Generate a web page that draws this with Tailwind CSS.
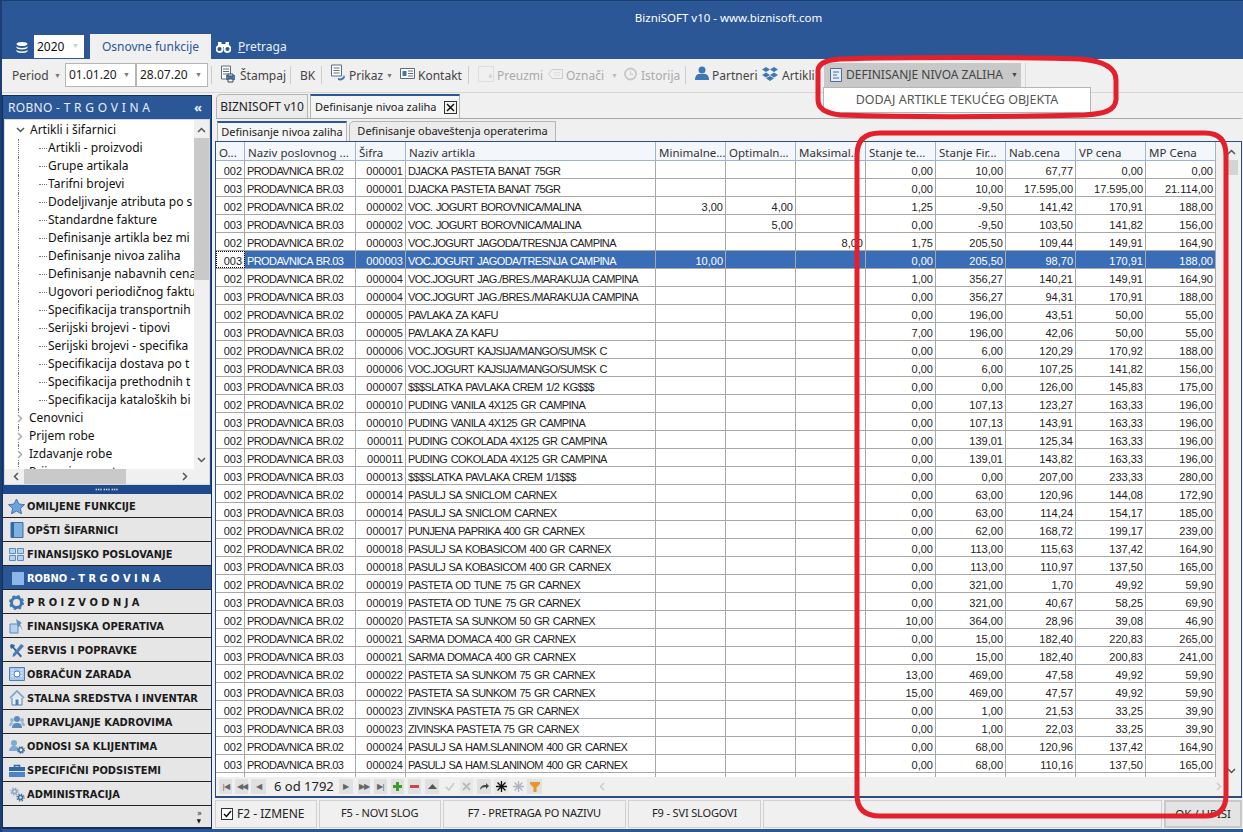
<!DOCTYPE html>
<html lang="en">
<head>
  <meta charset="UTF-8">
  <title>BizniSOFT v10</title>
  <script src="https://cdn.jsdelivr.net/npm/@tailwindcss/browser@4"></script>
</head>
<body class="bg-[#f0f0f0] text-[#222] font-['Noto_Sans','Liberation_Sans',sans-serif] text-[12px] overflow-hidden">
<div class="relative w-[1243px] h-[832px] overflow-hidden flex flex-col border-l-2 border-[#1c3f73]">

  <!-- title bar + ribbon tabs -->
  <div class="h-[59px] shrink-0 bg-[#2b5797] flex flex-col -ml-[2px]">
    <div class="h-[34px] flex items-center justify-center pl-[214px] text-white text-[11.5px] border-t border-[#1c3f73]">BizniSOFT v10 - www.biznisoft.com</div>
    <div class="h-[25px] flex items-end">
      <svg class="ml-[16px] mb-[6px]" width="12" height="11" viewBox="0 0 12 11"><ellipse cx="6" cy="2" rx="5.5" ry="2" fill="#fff"/><path d="M.5 4c0 1 2.5 2 5.500 2s5.500-1 5.500-2v1.500c0 1-2.500 2-5.500 2s-5.500-1-5.500-2zM.5 7.500c0 1 2.500 2 5.500 2s5.500-1 5.500-2v1.500c0 1-2.500 2-5.500 2s-5.500-1-5.500-2z" fill="#fff"/></svg>
      <div class="ml-[6px] mb-[1px] w-[50px] h-[23px] bg-white text-[#111] text-[12px] flex items-center justify-between pl-[3px] pr-[5px]"><span>2020</span><span class="text-[#ccc] text-[7px]">▼</span></div>
      <div class="ml-[6px] w-[121px] h-[25px] bg-[#f0f0f0] text-[#2b5797] flex items-center justify-center text-[12px]">Osnovne funkcije</div>
      <svg class="ml-[5px] mb-[6px]" width="15" height="12" viewBox="0 0 15 12"><circle cx="3.500" cy="8" r="3" fill="none" stroke="#fff" stroke-width="1.800"/><circle cx="11.500" cy="8" r="3" fill="none" stroke="#fff" stroke-width="1.800"/><path d="M2 1h3.500v5H2zM9.500 1H13v5H9.500zM5.500 3h4v3h-4z" fill="#fff"/></svg>
      <div class="ml-[7px] mb-[3px] text-[#e8eef7] text-[12px]"><span class="underline">P</span>retraga</div>
    </div>
  </div>

  <!-- toolbar -->
  <div class="h-[34px] shrink-0 flex items-start pt-[4px] text-[12px] text-[#444] border-b border-[#d6d6d6]">
    <span class="ml-[10px] w-[33px] mt-[4px]">Period</span>
    <span class="ml-[9px] w-[11px] mt-[8px] text-[7px] text-[#777]">▼</span>
    <div class="w-[71px] h-[24px] bg-white border border-[#b5b5b5] flex items-center justify-between pl-[3px] pr-[5px] text-[#222]"><span>01.01.20</span><span class="text-[7px] text-[#777]">▼</span></div>
    <div class="w-[72px] h-[24px] bg-white border border-[#b5b5b5] flex items-center justify-between pl-[3px] pr-[5px] text-[#222]"><span>28.07.20</span><span class="text-[7px] text-[#777]">▼</span></div>
    <i class="ml-[3px] mt-[3px] w-px h-[18px] bg-[#ccc]"></i>
    <svg class="ml-[8px] mt-[2px]" width="16" height="18" viewBox="0 0 16 18"><path d="M1.500 1h9v13h-9z" fill="#fff" stroke="#5b6b80"/><path d="M3 4h6M3 6.500h6M3 9h6" stroke="#5b6b80"/><path d="M6 10h9v5H6z" fill="#4a78b0"/><path d="M8 9h5v2H8zM8 14h5v3H8z" fill="#fff" stroke="#345"/></svg>
    <span class="ml-[4px] w-[44px] mt-[4px]">Štampaj</span>
    <i class="ml-[6px] mt-[3px] w-px h-[18px] bg-[#ccc]"></i>
    <span class="ml-[9px] w-[15px] mt-[4px]">BK</span>
    <i class="ml-[6px] mt-[3px] w-px h-[18px] bg-[#ccc]"></i>
    <svg class="ml-[8px] mt-[1px]" width="16" height="18" viewBox="0 0 16 18"><path d="M1.500 1h10v11h-10z" fill="#fff" stroke="#5b6b80"/><path d="M3.500 4h6M3.500 6.500h6M3.500 9h6" stroke="#5b6b80"/><path d="M8 14c3 1 5 0 6-3l1 2c-1 3-4 4-7 3z" fill="#3f77b5"/></svg>
    <span class="ml-[3px] w-[31px] mt-[4px]">Prikaz</span>
    <span class="ml-[6px] w-[13px] mt-[8px] text-[7px] text-[#777]">▼</span>
    <svg class="ml-[1px] mt-[5px]" width="15" height="11" viewBox="0 0 15 11"><path d="M.5.500h14v10H.5z" fill="#fff" stroke="#5b6b80"/><path d="M2.500 3h4v5h-4z" fill="#3f77b5"/><path d="M8 3h5M8 5.500h5M8 8h5" stroke="#5b6b80"/></svg>
    <span class="ml-[3px] w-[44px] mt-[4px]">Kontakt</span>
    <i class="ml-[6px] mt-[3px] w-px h-[18px] bg-[#ccc]"></i>
    <svg class="ml-[9px] mt-[3px]" width="16" height="16" viewBox="0 0 16 16"><path d="M.5.500h15v15H.5z" fill="none" stroke="#ddd"/><path d="M4 4l4 1 4 5-2 1 4 1-1-4-2 1-3-4z" fill="#ccc"/></svg>
    <span class="ml-[3px] w-[43px] mt-[4px] text-[#aaa]">Preuzmi</span>
    <svg class="ml-[8px] mt-[6px]" width="15" height="10" viewBox="0 0 15 10"><path d="M4 .500h10.500v9H4L.5 5z" fill="none" stroke="#ccc"/><path d="M6 3.500h6M6 6h6" stroke="#ddd"/></svg>
    <span class="ml-[3px] w-[36px] mt-[4px] text-[#aaa]">Označi</span>
    <span class="ml-[9px] w-[12px] mt-[8px] text-[7px] text-[#bbb]">▼</span>
    <svg class="mt-[4px]" width="14" height="14" viewBox="0 0 14 14"><circle cx="7.500" cy="7" r="5.500" fill="none" stroke="#c8c8c8" stroke-width="1.800"/><path d="M7.500 4v3.500H10" fill="none" stroke="#c8c8c8"/></svg>
    <span class="ml-[4px] w-[37px] mt-[4px] text-[#aaa]">Istorija</span>
    <i class="ml-[7px] mt-[3px] w-px h-[18px] bg-[#ccc]"></i>
    <svg class="ml-[9px] mt-[3px]" width="14" height="15" viewBox="0 0 14 15"><circle cx="7" cy="4" r="3.500" fill="#3f77b5"/><path d="M0 14c0-4 2-6 4-6h6c2 0 4 2 4 6z" fill="#3f77b5"/></svg>
    <span class="ml-[3px] w-[44px] mt-[4px]">Partneri</span>
    <svg class="ml-[6px] mt-[3px]" width="16" height="15" viewBox="0 0 16 15"><path d="M4 1l4 2.500L4 6 0 3.500zM12 1l4 2.500L12 6 8 3.500zM4 6.500L8 9l-4 2.500L0 9zM12 6.500L16 9l-4 2.500L8 9zM4 12.200l4-2.200 4 2.200L8 15z" fill="#3f77b5"/></svg>
    <span class="ml-[4px] w-[30px] mt-[4px]">Artikli</span>
    <div class="ml-[12px] w-[197px] h-[24px] bg-[#c8c8c8] flex items-center text-[#444]">
      <svg class="ml-[6px]" width="12" height="14" viewBox="0 0 12 14"><path d="M.5.500h11v13H.5z" fill="#e6eef7" stroke="#4a6d96"/><path d="M3 4h6M3 7h4M3 10h6" stroke="#4a6d96"/></svg>
      <span class="ml-[4px] text-[12px] whitespace-nowrap">DEFINISANJE NIVOA ZALIHA</span>
      <span class="ml-[8px] text-[7px] text-[#444]">▼</span>
    </div>
    <i class="ml-[4px] w-px h-[26px] bg-[#d6d6d6]"></i>
  </div>

  <!-- main -->
  <div class="flex-1 min-h-0 flex pt-[2px]">
    <!-- left side -->
    <div class="w-[210px] shrink-0 flex flex-col bg-[#1c4a8c] border border-[#12305c] border-b-2">
      <div class="h-[23px] shrink-0 bg-[#2b5797] text-[#e8eef7] flex items-center justify-between pl-[5px] pr-[9px] text-[12px]"><span class="tracking-[0.3px]">ROBNO - T R G O V I N A</span><span class="font-bold text-[13px] leading-none">«</span></div>
      <div class="h-[366px] shrink-0 bg-[#f0f0f0] mx-[1px] flex flex-col border border-[#d8d8d8]">
        <div class="flex-1 min-h-0 flex">
          <div id="tree" class="w-[189px] bg-white overflow-hidden pt-[1px] text-[12px] text-[#111]"></div>
          <div class="flex-1 flex flex-col items-center text-[#555]">
            <svg class="mt-[7px]" width="9" height="6" viewBox="0 0 9 6"><path d="M1 5l3.500-3.500L8 5" fill="none" stroke="#555" stroke-width="1.500"/></svg>
            <div class="w-full h-[142px] mt-[5px] bg-[#c9c9c9]"></div>
            <svg class="mt-auto mb-[6px]" width="9" height="6" viewBox="0 0 9 6"><path d="M1 1l3.500 3.500L8 1" fill="none" stroke="#555" stroke-width="1.500"/></svg>
          </div>
        </div>
        <div class="h-[15px] shrink-0 flex items-center">
          <svg class="ml-[8px]" width="6" height="9" viewBox="0 0 6 9"><path d="M5 1L1.500 4.500 5 8" fill="none" stroke="#555" stroke-width="1.500"/></svg>
          <div class="ml-[5px] w-[102px] h-full bg-[#c9c9c9]"></div>
          <svg class="ml-[56px]" width="6" height="9" viewBox="0 0 6 9"><path d="M1 1l3.500 3.500L1 8" fill="none" stroke="#555" stroke-width="1.500"/></svg>
        </div>
      </div>
      <div class="h-[9px] shrink-0 flex items-center justify-center text-white text-[7px] leading-none tracking-[1px] font-bold">⋯⋯⋯</div>
      <div id="nav" class="flex-1 min-h-0 flex flex-col text-[11px] font-bold text-[#1a1a1a] font-['DejaVu_Sans_Condensed','DejaVu_Sans',sans-serif]">
        <div class="h-[24px] pt-[3px] bg-[#e6e6e6] border-b border-[#222] flex items-center pl-[5px] gap-[2px]">
          <svg class="-mt-[2px]" width="17" height="16" viewBox="0 0 17 16"><path d="M8.500 1l2.400 5 5.600.7-4.100 3.700 1.100 5.400-5-2.700-5 2.700 1.100-5.400L.5 6.700l5.600-.7z" fill="#6fa3dc" stroke="#3f77b5"/></svg><span>OMILJENE FUNKCIJE</span>
        </div>
        <div class="h-[24px] pt-[3px] bg-[#e6e6e6] border-b border-[#222] flex items-center pl-[7px] gap-[3px]">
          <svg class="-mt-[2px]" width="14" height="16" viewBox="0 0 14 16"><path d="M1 .500h12v15H1z" fill="#7fb0e2" stroke="#3f6f9f"/><path d="M1 .500h3v15H1z" fill="#2f6aa8"/></svg><span>OPŠTI ŠIFARNICI</span>
        </div>
        <div class="h-[24px] pt-[3px] bg-[#e6e6e6] border-b border-[#222] flex items-center pl-[6px] gap-[3px]">
          <svg class="-mt-[2px]" width="15" height="13" viewBox="0 0 15 13"><path d="M.5.500h6v5h-6zM8.500.500h6v5h-6zM.5 7.500h6v5h-6zM8.500 7.500h6v5h-6z" fill="#b9d2ec" stroke="#5b8cbf"/></svg><span>FINANSIJSKO POSLOVANJE</span>
        </div>
        <div class="h-[24px] pt-[3px] bg-[#2b5797] border-b border-[#222] text-white flex items-center pl-[9px] gap-[3px]">
          <svg class="-mt-[2px]" width="12" height="13" viewBox="0 0 12 13"><path d="M0 0h12v13H0z" fill="#8bb8e8"/></svg><span>ROBNO - T R G O V I N A</span>
        </div>
        <div class="h-[24px] pt-[3px] bg-[#e6e6e6] border-b border-[#222] flex items-center pl-[6px] gap-[3px]">
          <svg class="-mt-[2px]" width="15" height="15" viewBox="0 0 15 15"><circle cx="7.500" cy="7.500" r="5" fill="none" stroke="#3f77b5" stroke-width="3"/><circle cx="7.500" cy="7.500" r="6.300" fill="none" stroke="#3f77b5" stroke-width="2.400" stroke-dasharray="2.500 2.450"/></svg><span>P R O I Z V O D N J A</span>
        </div>
        <div class="h-[24px] pt-[3px] bg-[#e6e6e6] border-b border-[#222] flex items-center pl-[6px] gap-[2px]">
          <svg class="-mt-[2px]" width="16" height="16" viewBox="0 0 16 16"><path d="M1 6h8v9H1z" fill="#b9d2ec" stroke="#5b8cbf"/><path d="M7 1l6 4-2 1 3 7-3-5-2 1z" fill="#5b8cbf"/></svg><span>FINANSIJSKA OPERATIVA</span>
        </div>
        <div class="h-[24px] pt-[3px] bg-[#e6e6e6] border-b border-[#222] flex items-center pl-[6px] gap-[2px]">
          <svg class="-mt-[2px]" width="16" height="15" viewBox="0 0 16 15"><path d="M2 1l4 1-1 2 8 9-1.500 1.500L3.500 5 2 6 1 3z" fill="#34659c"/><path d="M12 1l3 2-9 10-2.500 1L4 11z" fill="#4a7fb8"/></svg><span>SERVIS I POPRAVKE</span>
        </div>
        <div class="h-[24px] pt-[3px] bg-[#e6e6e6] border-b border-[#222] flex items-center pl-[6px] gap-[2px]">
          <svg class="-mt-[2px]" width="16" height="14" viewBox="0 0 16 14"><path d="M.5.500h15v13H.5z" fill="#a9c9ea" stroke="#4a7fb8"/><circle cx="8" cy="7" r="3" fill="#fff" stroke="#4a7fb8"/><path d="M2.500 3h2M2.500 6h2M2.500 9h2M11.500 3h2M11.500 6h2M11.500 9h2" stroke="#fff"/></svg><span>OBRAČUN ZARADA</span>
        </div>
        <div class="h-[24px] pt-[3px] bg-[#e6e6e6] border-b border-[#222] flex items-center pl-[6px] gap-[2px]">
          <svg class="-mt-[2px]" width="16" height="16" viewBox="0 0 16 16"><path d="M1 8l7-7 7 7" fill="none" stroke="#6f9fd0" stroke-width="1.500"/><path d="M3 8v7h10V8" fill="#e8f1fa" stroke="#4a7fb8"/><path d="M6.500 9.500h3V15h-3z" fill="#4a7fb8"/></svg><span>STALNA SREDSTVA I INVENTAR</span>
        </div>
        <div class="h-[24px] pt-[3px] bg-[#e6e6e6] border-b border-[#222] flex items-center pl-[6px] gap-[2px]">
          <svg class="-mt-[2px]" width="16" height="14" viewBox="0 0 16 14"><circle cx="8" cy="4" r="3" fill="#5b8cbf"/><circle cx="3" cy="5" r="2" fill="#8fb5dc"/><circle cx="13" cy="5" r="2" fill="#8fb5dc"/><path d="M3 13c0-4 2-5 5-5s5 1 5 5z" fill="#5b8cbf"/><path d="M0 11c0-2 1-4 3-4l1 1-2 3zM16 11c0-2-1-4-3-4l-1 1 2 3z" fill="#8fb5dc"/></svg><span>UPRAVLJANJE KADROVIMA</span>
        </div>
        <div class="h-[24px] pt-[3px] bg-[#e6e6e6] border-b border-[#222] flex items-center pl-[6px] gap-[2px]">
          <svg class="-mt-[2px]" width="16" height="15" viewBox="0 0 16 15"><circle cx="5" cy="4" r="3" fill="#7fa9d4"/><path d="M0 12c0-3 2-5 5-5s4 1 4 2v3z" fill="#7fa9d4"/><circle cx="12" cy="11" r="2.200" fill="none" stroke="#3f6f9f" stroke-width="1.500"/><circle cx="12" cy="11" r="3.300" fill="none" stroke="#3f6f9f" stroke-width="1.300" stroke-dasharray="1.300 1.300"/></svg><span>ODNOSI SA KLIJENTIMA</span>
        </div>
        <div class="h-[24px] pt-[3px] bg-[#e6e6e6] border-b border-[#222] flex items-center pl-[6px] gap-[2px]">
          <svg class="-mt-[2px]" width="16" height="13" viewBox="0 0 16 13"><path d="M5.500 3V1.500h5V3" fill="none" stroke="#2f6aa8" stroke-width="1.500"/><path d="M0 3h16v4H0z" fill="#2f6aa8"/><path d="M0 8h16v5H0z" fill="#4a86c5"/></svg><span>SPECIFIČNI PODSISTEMI</span>
        </div>
        <div class="h-[24px] pt-[3px] bg-[#e6e6e6] border-b border-[#222] flex items-center pl-[7px] gap-[2px]">
          <svg class="-mt-[2px]" width="15" height="15" viewBox="0 0 15 15"><circle cx="4.500" cy="4.500" r="2" fill="none" stroke="#8aa5c2" stroke-width="1.500"/><circle cx="4.500" cy="4.500" r="3.500" fill="none" stroke="#8aa5c2" stroke-width="1.300" stroke-dasharray="1.400 1.350"/><circle cx="10.500" cy="10.500" r="2" fill="none" stroke="#3f6f9f" stroke-width="1.500"/><circle cx="10.500" cy="10.500" r="3.500" fill="none" stroke="#3f6f9f" stroke-width="1.300" stroke-dasharray="1.400 1.350"/></svg><span>ADMINISTRACIJA</span>
        </div>
        <div class="flex-1 bg-[#e6e6e6] flex flex-col items-end pr-[9px] pt-[3px] text-[9px] leading-[8px] font-normal"><span>»</span><span class="text-[6px] mr-[1px]">▼</span></div>
      </div>
    </div>

    <!-- right side -->
    <div class="ml-[4px] w-[1026px] flex flex-col">
      <div class="h-[24px] shrink-0 flex items-end border-b border-[#a8a8a8]">
        <div class="w-[92px] h-[24px] bg-[#ececec] border border-b-0 border-[#b5b5b5] rounded-tl-[5px] flex items-center justify-center text-[12px] text-[#222]">BIZNISOFT v10</div>
        <div class="ml-[2px] w-[150px] h-[24px] bg-[#f5f5f5] border-x border-[#b5b5b5] border-t-2 border-t-[#2b5797] flex items-center pl-[4px] text-[11px] text-[#222] whitespace-nowrap">
          <span>Definisanje nivoa zaliha</span>
          <span class="ml-auto mr-[2px] w-[13px] h-[13px] border border-[#333] flex items-center justify-center"><svg width="9" height="9" viewBox="0 0 9 9"><path d="M1 1l7 7M8 1L1 8" stroke="#111" stroke-width="1.500"/></svg></span>
        </div>
      </div>
      <div class="h-[22px] shrink-0 flex items-end pt-[2px] pl-[1px]">
        <div class="w-[130px] h-[20px] bg-[#f5f5f5] border-x border-[#b5b5b5] border-t-2 border-t-[#2b5797] flex items-center justify-center text-[11px] text-[#222] whitespace-nowrap">Definisanje nivoa zaliha</div>
        <div class="ml-[2px] w-[207px] h-[20px] bg-[#ececec] border border-b-0 border-[#b5b5b5] rounded-tl-[5px] flex items-center justify-center text-[11px] text-[#222] whitespace-nowrap">Definisanje obaveštenja operaterima</div>
      </div>

      <!-- grid -->
      <div class="flex-1 min-h-0 flex flex-col bg-[#f0f0f0] border border-[#2b4f80] border-b-2 -ml-[1px] text-[11px] font-['Liberation_Sans',sans-serif]">
        <div class="flex-1 min-h-0 flex">
          <div class="flex-1 min-w-0 overflow-hidden flex flex-col bg-white">
            <div id="head" class="h-[19px] shrink-0 flex bg-[#f3f6fb] border-b border-[#9db4d3] text-[11.5px] text-[#333] font-['Noto_Sans',sans-serif]"></div>
            <div id="rows" class="flex-1 min-h-0 overflow-hidden"></div>
          </div>
          <div class="w-[25px] shrink-0 flex flex-col items-end pr-[3px]">
            <svg class="mt-[7px] mr-[2px]" width="9" height="6" viewBox="0 0 9 6"><path d="M1 5l3.500-3.500L8 5" fill="none" stroke="#555" stroke-width="1.500"/></svg>
            <div class="w-[12px] h-[15px] mt-[5px] bg-[#d4d4d4]"></div>
            <svg class="mt-auto mb-[3px] mr-[2px]" width="9" height="6" viewBox="0 0 9 6"><path d="M1 1l3.500 3.500L8 1" fill="none" stroke="#555" stroke-width="1.500"/></svg>
          </div>
        </div>
        <!-- navigator -->
        <div class="h-[19px] shrink-0 flex items-center pl-[3px] text-[#666] bg-[#f0f0f0] [&>*]:shrink-0">
          <span class="w-[13px] h-[15px] bg-[#e0e0e0] flex items-center justify-center text-[8px] tracking-[-1px]">|◀</span>
          <span class="ml-[3px] w-[13px] h-[15px] bg-[#e0e0e0] flex items-center justify-center text-[8px] tracking-[-1px]">◀◀</span>
          <span class="ml-[3px] w-[15px] h-[15px] bg-[#e0e0e0] flex items-center justify-center text-[8px]">◀</span>
          <span class="ml-[8px] w-[65px] text-[13px] text-[#222] font-['Noto_Sans',sans-serif] whitespace-nowrap">6 od 1792</span>
          <span class="w-[14px] h-[15px] bg-[#e0e0e0] flex items-center justify-center text-[8px]">▶</span>
          <span class="ml-[5px] w-[12px] h-[15px] bg-[#e0e0e0] flex items-center justify-center text-[8px] tracking-[-1px]">▶▶</span>
          <span class="ml-[4px] w-[13px] h-[15px] bg-[#e0e0e0] flex items-center justify-center text-[8px] tracking-[-1px]">▶|</span>
          <span class="ml-[4px] w-[13px] h-[15px] bg-[#e0e0e0] flex items-center justify-center"><svg width="9" height="9" viewBox="0 0 9 9"><path d="M3 0h3v3h3v3H6v3H3V6H0V3h3z" fill="#3f9a2e"/></svg></span>
          <span class="ml-[4px] w-[13px] h-[15px] bg-[#e0e0e0] flex items-center justify-center"><svg width="9" height="3" viewBox="0 0 9 3"><path d="M0 0h9v3H0z" fill="#c24a4a"/></svg></span>
          <span class="ml-[4px] w-[14px] h-[15px] bg-[#e0e0e0] flex items-center justify-center"><svg width="9" height="5" viewBox="0 0 9 5"><path d="M4.500 0L9 5H0z" fill="#555"/></svg></span>
          <span class="ml-[4px] w-[13px] h-[15px] flex items-center justify-center"><svg width="10" height="9" viewBox="0 0 10 9"><path d="M1 5l3 3 5-7" fill="none" stroke="#ccc" stroke-width="1.800"/></svg></span>
          <span class="ml-[4px] w-[13px] h-[15px] bg-[#e8e8e8] flex items-center justify-center"><svg width="9" height="9" viewBox="0 0 9 9"><path d="M1 1l7 7M8 1L1 8" stroke="#bbb" stroke-width="1.800"/></svg></span>
          <span class="ml-[4px] w-[14px] h-[15px] bg-[#e0e0e0] flex items-center justify-center"><svg width="10" height="8" viewBox="0 0 10 8"><path d="M1 7c0-3 2-5 6-5V0l3 3-3 3V4C4 4 2 5 1 7z" fill="#444"/></svg></span>
          <span class="ml-[3px] w-[14px] h-[15px] bg-[#e8e8e8] flex items-center justify-center"><svg width="11" height="11" viewBox="0 0 11 11"><path d="M5.500 0v11M0 5.500h11M1.500 1.500l8 8M9.500 1.500l-8 8" stroke="#111" stroke-width="1.300"/></svg></span>
          <span class="ml-[3px] w-[14px] h-[15px] flex items-center justify-center"><svg width="11" height="11" viewBox="0 0 11 11"><path d="M5.500 0v11M0 5.500h11M1.500 1.500l8 8M9.500 1.500l-8 8" stroke="#aab4bd" stroke-width="1.300"/></svg></span>
          <span class="ml-[2px] w-[15px] h-[15px] bg-[#e2e2e2] flex items-center justify-center"><svg width="10" height="10" viewBox="0 0 10 10"><path d="M0 0h10v2L6.500 5.500V10h-3V5.500L0 2z" fill="#e8962c"/></svg></span>
          <div class="flex-1 flex items-center justify-between pl-[57px] pr-[19px]">
            <svg width="6" height="9" viewBox="0 0 6 9"><path d="M5 1L1.500 4.500 5 8" fill="none" stroke="#ccc" stroke-width="1.500"/></svg>
            <svg width="6" height="9" viewBox="0 0 6 9"><path d="M1 1l3.500 3.500L1 8" fill="none" stroke="#ccc" stroke-width="1.500"/></svg>
          </div>
        </div>
      </div>

      <!-- bottom buttons -->
      <div class="h-[31px] shrink-0 flex items-center gap-[2px] text-[12px] text-[#222] -ml-[1px]">
        <div class="w-[102px] h-[28px] border border-[#d0d0d0] flex items-center pl-[5px] gap-[4px]">
          <span class="w-[12px] h-[12px] bg-white border border-[#333] flex items-center justify-center"><svg width="9" height="8" viewBox="0 0 9 8"><path d="M1 4l2.500 2.500L8 1" fill="none" stroke="#111" stroke-width="1.500"/></svg></span>
          <span>F2 - IZMENE</span>
        </div>
        <div class="w-[122px] h-[28px] border border-[#d0d0d0] flex items-center justify-center text-[11px] tracking-[-0.15px]">F5 - NOVI SLOG</div>
        <div class="w-[184px] h-[28px] border border-[#d0d0d0] flex items-center justify-center text-[11px] tracking-[-0.15px]">F7 - PRETRAGA PO NAZIVU</div>
        <div class="w-[133px] h-[28px] border border-[#d0d0d0] flex items-center justify-center text-[11px] tracking-[-0.15px]">F9 - SVI SLOGOVI</div>
        <div class="w-[400px] h-[28px] border border-[#d0d0d0]"></div>
        <div class="w-[78px] h-[28px] bg-[#e4e4e4] border-2 border-[#c8c8c8] flex items-center justify-center text-[11.5px]">OK / UPISI</div>
      </div>
    </div>
  </div>
  <div class="h-[3px] shrink-0 bg-[#2b5797]"></div>

  <!-- open dropdown of the toolbar button -->
  <div class="absolute left-[821px] top-[87px] w-[268px] h-[26px] bg-white border border-[#b5b5b5] flex items-center justify-center text-[12.5px] text-[#555]">DODAJ ARTIKLE TEKUĆEG OBJEKTA</div>

  <!-- red marker drawn on top of the screenshot -->
  <svg class="absolute -left-[2px] top-0 pointer-events-none" width="1243" height="832" viewBox="0 0 1243 832">
    <path d="M840 59C900 57 1040 57 1080 59C1105 61 1116 68 1116 80L1116 100C1115 110 1105 114 1085 115C1000 117 900 117 840 115C824 113 818 108 818 100L818 70C819 63 826 60 840 59Z" fill="none" stroke="#e4202c" stroke-width="5"/>
    <path d="M880 133L1205 133Q1226 133 1226 155L1226 795Q1226 816 1205 816L880 816Q857 816 857 795L857 155Q857 133 880 133Z" fill="none" stroke="#e4202c" stroke-width="5"/>
  </svg>
</div>

<script>
  // tree on the left panel
  const treeKids = ['Artikli - proizvodi','Grupe artikala','Tarifni brojevi','Dodeljivanje atributa po s','Standardne fakture','Definisanje artikla bez mi','Definisanje nivoa zaliha','Definisanje nabavnih cena','Ugovori periodičnog faktu','Specifikacija transportnih','Serijski brojevi - tipovi','Serijski brojevi - specifika','Specifikacija dostava po t','Specifikacija prethodnih t','Specifikacija kataloških bi'];
  const treeTops = ['Cenovnici','Prijem robe','Izdavanje robe','Prijem i promet'];
  const dotted = '<i class="absolute left-[13px] top-0 h-full border-l border-dotted border-[#777]"></i>';
  let treeHtml = '<div class="h-[18px] flex items-center relative whitespace-nowrap"><svg class="ml-[11px]" width="9" height="6" viewBox="0 0 9 6"><path d="M1 1l3.500 3.500L8 1" fill="none" stroke="#555" stroke-width="1.500"/></svg><span class="ml-[5px]">Artikli i šifarnici</span></div>';
  treeKids.forEach(k => {
    treeHtml += '<div class="h-[18px] flex items-center relative whitespace-nowrap overflow-hidden">' + dotted + '<i class="ml-[34px] w-[8px] shrink-0 border-t border-dotted border-[#777]"></i><span class="ml-[1px]">' + k + '</span></div>';
  });
  treeTops.forEach(k => {
    treeHtml += '<div class="h-[18px] flex items-center relative whitespace-nowrap">' + dotted + '<svg class="ml-[12px] relative bg-white" width="6" height="9" viewBox="0 0 6 9"><path d="M1 1l3.500 3.500L1 8" fill="none" stroke="#aaa" stroke-width="1.500"/></svg><span class="ml-[6px]">' + k + '</span></div>';
  });
  document.getElementById('tree').innerHTML = treeHtml;

  // grid
  const cols = [
    ['O...',29,'text-right'],['Naziv poslovnog ...',111,'text-left'],['Šifra',50,'text-right'],['Naziv artikla',250,'text-left'],
    ['Minimalne...',70,'text-right'],['Optimaln...',70,'text-right'],['Maksimal...',70,'text-right'],['Stanje te...',70,'text-right'],
    ['Stanje Fir...',70,'text-right'],['Nab.cena',70,'text-right'],['VP cena',70,'text-right'],['MP Cena',70,'text-right']
  ];
  document.getElementById('head').innerHTML = cols.map(c =>
    '<div class="h-full shrink-0 border-r border-[#9db4d3] pl-[3px] pt-[3px] flex items-center whitespace-nowrap overflow-hidden" style="width:' + c[1] + 'px">' + c[0] + '</div>'
  ).join('');

  const data = [
    ['002','000001','DJACKA PASTETA BANAT 75GR','','','','0,00','10,00','67,77','0,00','0,00'],
    ['003','000001','DJACKA PASTETA BANAT 75GR','','','','0,00','10,00','17.595,00','17.595,00','21.114,00'],
    ['002','000002','VOC. JOGURT BOROVNICA/MALINA','3,00','4,00','','1,25','-9,50','141,42','170,91','188,00'],
    ['003','000002','VOC. JOGURT BOROVNICA/MALINA','','5,00','','0,00','-9,50','103,50','141,82','156,00'],
    ['002','000003','VOC.JOGURT JAGODA/TRESNJA CAMPINA','','','8,00','1,75','205,50','109,44','149,91','164,90'],
    ['003','000003','VOC.JOGURT JAGODA/TRESNJA CAMPINA','10,00','','','0,00','205,50','98,70','170,91','188,00'],
    ['002','000004','VOC.JOGURT JAG./BRES./MARAKUJA CAMPINA','','','','1,00','356,27','140,21','149,91','164,90'],
    ['003','000004','VOC.JOGURT JAG./BRES./MARAKUJA CAMPINA','','','','0,00','356,27','94,31','170,91','188,00'],
    ['002','000005','PAVLAKA ZA KAFU','','','','0,00','196,00','43,51','50,00','55,00'],
    ['003','000005','PAVLAKA ZA KAFU','','','','7,00','196,00','42,06','50,00','55,00'],
    ['002','000006','VOC.JOGURT KAJSIJA/MANGO/SUMSK C','','','','0,00','6,00','120,29','170,92','188,00'],
    ['003','000006','VOC.JOGURT KAJSIJA/MANGO/SUMSK C','','','','0,00','6,00','107,25','141,82','156,00'],
    ['003','000007','$$$SLATKA PAVLAKA CREM 1/2 KG$$$','','','','0,00','0,00','126,00','145,83','175,00'],
    ['002','000010','PUDING VANILA 4X125 GR CAMPINA','','','','0,00','107,13','123,27','163,33','196,00'],
    ['003','000010','PUDING VANILA 4X125 GR CAMPINA','','','','0,00','107,13','143,91','163,33','196,00'],
    ['002','000011','PUDING COKOLADA 4X125 GR CAMPINA','','','','0,00','139,01','125,34','163,33','196,00'],
    ['003','000011','PUDING COKOLADA 4X125 GR CAMPINA','','','','0,00','139,01','143,82','163,33','196,00'],
    ['003','000013','$$$SLATKA PAVLAKA CREM 1/1$$$','','','','0,00','0,00','207,00','233,33','280,00'],
    ['002','000014','PASULJ SA SNICLOM CARNEX','','','','0,00','63,00','120,96','144,08','172,90'],
    ['003','000014','PASULJ SA SNICLOM CARNEX','','','','0,00','63,00','114,24','154,17','185,00'],
    ['002','000017','PUNJENA PAPRIKA 400 GR CARNEX','','','','0,00','62,00','168,72','199,17','239,00'],
    ['002','000018','PASULJ SA KOBASICOM 400 GR CARNEX','','','','0,00','113,00','115,63','137,42','164,90'],
    ['003','000018','PASULJ SA KOBASICOM 400 GR CARNEX','','','','0,00','113,00','110,97','137,50','165,00'],
    ['002','000019','PASTETA OD TUNE 75 GR CARNEX','','','','0,00','321,00','1,70','49,92','59,90'],
    ['003','000019','PASTETA OD TUNE 75 GR CARNEX','','','','0,00','321,00','40,67','58,25','69,90'],
    ['002','000020','PASTETA SA SUNKOM 50 GR CARNEX','','','','10,00','364,00','28,96','39,08','46,90'],
    ['002','000021','SARMA DOMACA 400 GR CARNEX','','','','0,00','15,00','182,40','220,83','265,00'],
    ['003','000021','SARMA DOMACA 400 GR CARNEX','','','','0,00','15,00','182,40','200,83','241,00'],
    ['002','000022','PASTETA SA SUNKOM 75 GR CARNEX','','','','13,00','469,00','47,58','49,92','59,90'],
    ['003','000022','PASTETA SA SUNKOM 75 GR CARNEX','','','','15,00','469,00','47,57','49,92','59,90'],
    ['002','000023','ZIVINSKA PASTETA 75 GR CARNEX','','','','0,00','1,00','21,53','33,25','39,90'],
    ['003','000023','ZIVINSKA PASTETA 75 GR CARNEX','','','','0,00','1,00','22,03','33,25','39,90'],
    ['002','000024','PASULJ SA HAM.SLANINOM 400 GR CARNEX','','','','0,00','68,00','120,96','137,42','164,90'],
    ['003','000024','PASULJ SA HAM.SLANINOM 400 GR CARNEX','','','','0,00','68,00','110,16','137,50','165,00'],
    ['','','','','','','','','','','']
  ];
  const selectedRow = 5;

  document.getElementById('rows').innerHTML = data.map((d, r) => {
    const values = [d[0], d[0] ? 'PRODAVNICA BR.' + d[0].slice(1) : '', ...d.slice(1)];
    const sel = r === selectedRow;
    const cells = values.map((v, i) => {
      let cls = 'h-full shrink-0 border-r border-[#a8a8a8] px-[2px] pt-[4px] flex items-center whitespace-nowrap ';
      cls += cols[i][2] === 'text-right' ? 'justify-end ' : 'justify-start tracking-[-0.6px] [word-spacing:1px] ';
      if (sel && i === 0) cls += 'bg-white outline outline-1 -outline-offset-1 outline-dotted outline-black text-[#222] ';
      return '<div class="' + cls + '" style="width:' + cols[i][1] + 'px">' + v + '</div>';
    }).join('');
    return '<div class="h-[18px] flex border-b border-[#a8a8a8] ' + (sel ? 'bg-[#3a6db8] text-white' : 'text-[#222]') + '">' + cells + '</div>';
  }).join('');
</script>
</body>
</html>
